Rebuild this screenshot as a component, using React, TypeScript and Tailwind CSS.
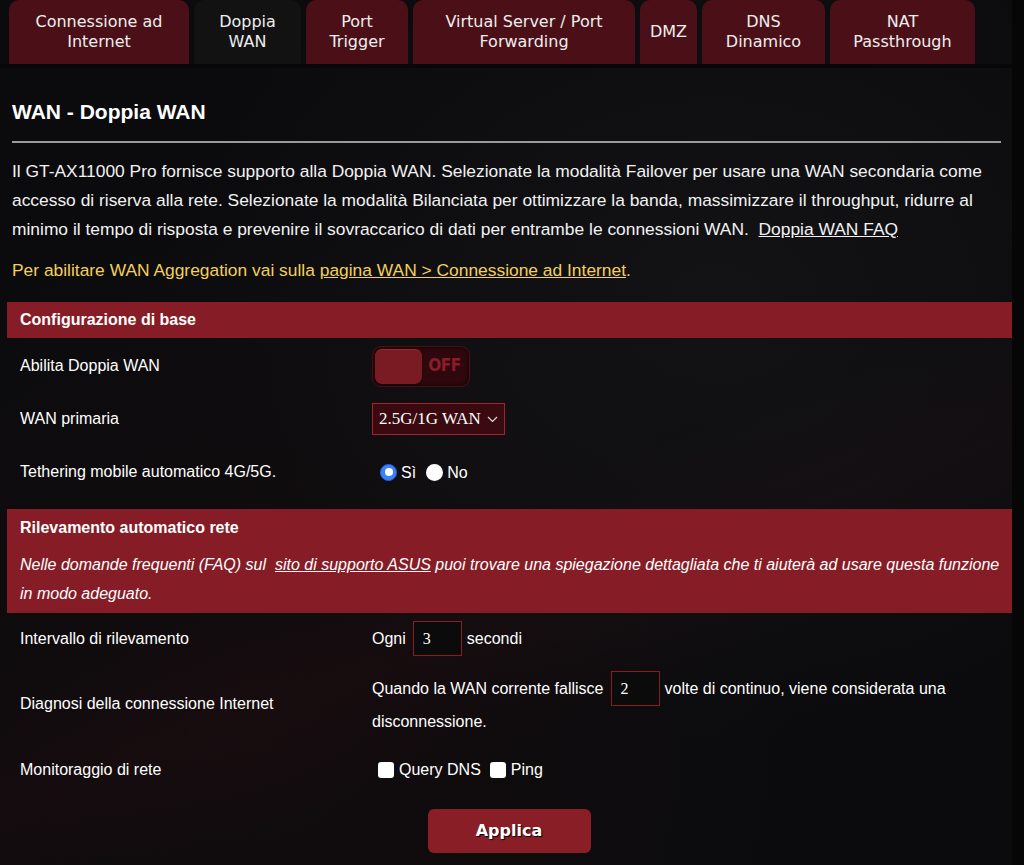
import React, { useState } from 'react';

const tabs = [
    { label: ['Connessione ad', 'Internet'], w: 'w-[180px]' },
    { label: ['Doppia', 'WAN'], w: 'w-[107px]', active: true },
    { label: ['Port', 'Trigger'], w: 'w-[102px]' },
    { label: ['Virtual Server / Port', 'Forwarding'], w: 'w-[222px]' },
    { label: ['DMZ'], w: 'w-[57px]' },
    { label: ['DNS', 'Dinamico'], w: 'w-[123px]' },
    { label: ['NAT', 'Passthrough'], w: 'w-[145px]' },
];

function Toggle({ on, onChange }: { on: boolean; onChange: () => void }) {
    return (
        <button
            onClick={onChange}
            className="flex items-center w-[98px] h-[41px] rounded-[9px] bg-[#2e080d] border border-[#4a0f16] p-[2px] shadow-[inset_0_0_4px_rgba(0,0,0,0.8)]"
        >
            <span className="w-[47px] h-full rounded-[7px] bg-[#7a1a23] border-t border-[#9a2a33] shadow-[0_1px_2px_rgba(0,0,0,0.6)]" />
            <span className="flex-1 text-center font-['DejaVu_Sans_Condensed','DejaVu_Sans',sans-serif] font-bold text-[17px] text-[#8d1c2a] tracking-tight">
                {on ? 'ON' : 'OFF'}
            </span>
        </button>
    );
}

function Row({ label, children, className = '' }: { label: string; children: React.ReactNode; className?: string }) {
    return (
        <div className={`flex items-center ${className}`}>
            <div className="w-[372px] pl-[20px] shrink-0">{label}</div>
            <div className="flex-1 flex items-center">{children}</div>
        </div>
    );
}

function SmallInput({ value }: { value: string }) {
    return (
        <div className="w-[49px] h-[35px] border border-[#8a1c24] bg-[#0b0b0c] flex items-center pl-[9px] font-['Liberation_Serif',serif] text-[16px] text-white">
            {value}
        </div>
    );
}

function Radio({ checked }: { checked: boolean }) {
    return (
        <span
            className={`w-[17px] h-[17px] rounded-full flex items-center justify-center ${
                checked ? 'bg-[#3b82f6] border border-[#2563eb]' : 'bg-white'
            }`}
        >
            {checked && <span className="w-[8px] h-[8px] rounded-full bg-white" />}
        </span>
    );
}

export default function App() {
    const [dual, setDual] = useState(false);
    const [tether, setTether] = useState(true);

    return (
        <div className="relative w-[1024px] h-[865px] overflow-hidden bg-[#0b0b0d] text-white font-['Liberation_Sans',Arial,sans-serif]">
            {/* background streaks */}
            <div className="absolute inset-0 pointer-events-none bg-[radial-gradient(ellipse_at_70%_35%,rgba(60,60,70,0.16),transparent_55%),radial-gradient(ellipse_at_25%_85%,rgba(70,18,22,0.12),transparent_50%),linear-gradient(160deg,transparent_55%,rgba(120,20,30,0.06)_65%,transparent_75%)]" />
            <div className="absolute top-0 bottom-0 left-[1012px] right-0 bg-[#060607]" />

            <div className="relative">
                {/* Tabs */}
                <div className="flex gap-[5px] pl-[9px] h-[64px]">
                    {tabs.map((t, i) => (
                        <div
                            key={i}
                            className={`${t.w} h-full rounded-t-[10px] flex flex-col items-center justify-center font-['DejaVu_Sans',Verdana,sans-serif] text-[16px] leading-[20px] text-[#eeeeee] ${
                                t.active ? 'bg-[#121212]' : 'bg-[#4b1017]'
                            }`}
                        >
                            {t.label.map((l) => (
                                <span key={l} className="whitespace-nowrap">{l}</span>
                            ))}
                        </div>
                    ))}
                </div>
                <div className="h-[4px] bg-[#070707] w-[1012px]" />

                {/* Content */}
                <div className="w-[1012px]">
                    <h1 className="pl-[12px] pt-[31px] text-[21px] font-bold leading-[25px]">WAN - Doppia WAN</h1>
                    <div className="ml-[12px] mr-[11px] mt-[17px] h-[2px] bg-[#9a9a9a]" />

                    <p className="px-[12px] mt-[14px] text-[17.4px] leading-[29px] text-[#f2f2f2]">
                        Il GT-AX11000 Pro fornisce supporto alla Doppia WAN. Selezionate la modalità Failover per usare una WAN secondaria come accesso di riserva alla rete. Selezionate la modalità Bilanciata per ottimizzare la banda, massimizzare il throughput, ridurre al minimo il tempo di risposta e prevenire il sovraccarico di dati per entrambe le connessioni WAN.&nbsp;{' '}
                        <a className="underline">Doppia WAN FAQ</a>
                    </p>
                    <p className="px-[12px] mt-[12px] text-[17.4px] leading-[29px] text-[#f3d05a]">
                        Per abilitare WAN Aggregation vai sulla <a className="underline">pagina WAN &gt; Connessione ad Internet</a>.
                    </p>

                    {/* Configurazione di base */}
                    <div className="ml-[7px] mt-[17px] h-[36px] bg-[#861d26] flex items-center pl-[13px] text-[16px] font-bold">
                        Configurazione di base
                    </div>

                    <div className="text-[16px]">
                        <Row label="Abilita Doppia WAN" className="h-[54px] mt-[1px]">
                            <Toggle on={dual} onChange={() => setDual(!dual)} />
                        </Row>
                        <Row label="WAN primaria" className="h-[52px]">
                            <div className="flex items-center w-[133px] h-[32px] border border-[#a3222d] bg-[#3a0a10] pl-[6px] pr-[6px] font-['Liberation_Serif',serif] text-[17px]">
                                <span className="flex-1 whitespace-nowrap">2.5G/1G WAN</span>
                                <svg width="11" height="7" viewBox="0 0 11 7" fill="none" stroke="#ddd" strokeWidth="1.2">
                                    <path d="M1 1l4.5 4.5L10 1" />
                                </svg>
                            </div>
                        </Row>
                        <Row label="Tethering mobile automatico 4G/5G." className="h-[54px]">
                            <label className="flex items-center ml-[8px] gap-[4px]" onClick={() => setTether(true)}>
                                <Radio checked={tether} />
                                <span className="mt-[2px]">Sì</span>
                            </label>
                            <label className="flex items-center ml-[10px] gap-[4px]" onClick={() => setTether(false)}>
                                <Radio checked={!tether} />
                                <span className="mt-[2px]">No</span>
                            </label>
                        </Row>
                    </div>

                    {/* Rilevamento automatico rete */}
                    <div className="ml-[7px] mt-[10px] bg-[#861d26] pl-[13px] pr-[4px] pt-[10px] pb-[5px]">
                        <div className="text-[16px] font-bold leading-[18px]">Rilevamento automatico rete</div>
                        <p className="mt-[13px] text-[16px] italic leading-[29px]">
                            Nelle domande frequenti (FAQ) sul&nbsp; <a className="underline">sito di supporto ASUS</a> puoi trovare una spiegazione dettagliata che ti aiuterà ad usare questa funzione in modo adeguato.
                        </p>
                    </div>

                    <div className="text-[16px]">
                        <Row label="Intervallo di rilevamento" className="h-[51px]">
                            <span>Ogni</span>
                            <span className="ml-[7px]"><SmallInput value="3" /></span>
                            <span className="ml-[5px]">secondi</span>
                        </Row>
                        <Row label="Diagnosi della connessione Internet" className="h-[80px]">
                            <div className="leading-[31px]">
                                <div className="flex items-center">
                                    <span>Quando la WAN corrente fallisce</span>
                                    <span className="ml-[7px]"><SmallInput value="2" /></span>
                                    <span className="ml-[5px]">volte di continuo, viene considerata una</span>
                                </div>
                                <div>disconnessione.</div>
                            </div>
                        </Row>
                        <Row label="Monitoraggio di rete" className="h-[51px]">
                            <span className="ml-[6px] w-[16px] h-[16px] rounded-[3px] bg-white" />
                            <span className="ml-[5px]">Query DNS</span>
                            <span className="ml-[9px] w-[16px] h-[16px] rounded-[3px] bg-white" />
                            <span className="ml-[5px]">Ping</span>
                        </Row>
                    </div>

                    <div className="flex justify-center mt-[14px] pl-[6px]">
                        <button className="w-[163px] h-[44px] rounded-[6px] bg-[#8a1e26] font-['DejaVu_Sans',Verdana,sans-serif] font-bold text-[16px] text-white [text-shadow:1px_1px_1px_#000]">
                            Applica
                        </button>
                    </div>
                </div>
            </div>
        </div>
    );
}
